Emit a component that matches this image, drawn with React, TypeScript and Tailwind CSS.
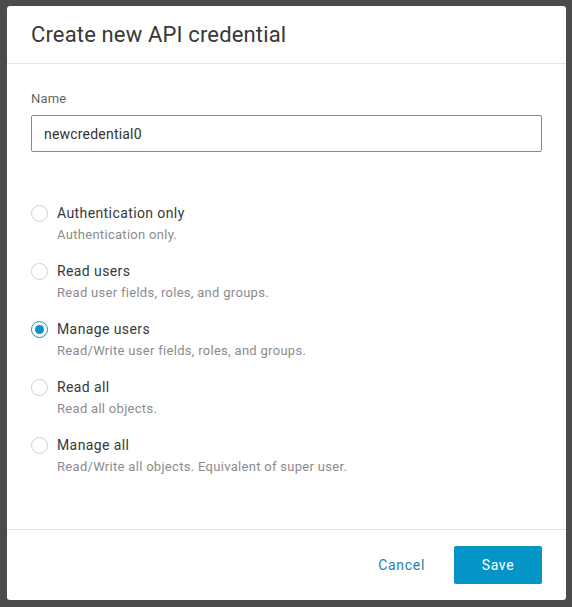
import { useState } from "react";

const options = [
	{ id: "auth", label: "Authentication only", desc: "Authentication only." },
	{ id: "read_users", label: "Read users", desc: "Read user fields, roles, and groups." },
	{ id: "manage_users", label: "Manage users", desc: "Read/Write user fields, roles, and groups." },
	{ id: "read_all", label: "Read all", desc: "Read all objects." },
	{ id: "manage_all", label: "Manage all", desc: "Read/Write all objects. Equivalent of super user." },
];

export default function App() {
	const [selected, setSelected] = useState("manage_users");
	const [name, setName] = useState("newcredential0");

	return (
		<div
			className="w-[572px] h-[607px] bg-[#4b4b4b] pl-[7px] pt-[6px] overflow-hidden"
			style={{ fontFamily: "Roboto, 'Liberation Sans', sans-serif" }}
		>
			<div className="w-[559px] h-[594px] bg-white rounded-[3px] flex flex-col">
				{/* Header */}
				<div className="h-[58px] border-b border-[#e3e3e3] px-6 flex items-center">
					<h2 className="text-[22px] text-[#383838] leading-none pt-[1px] tracking-[0.15px]">
						Create new API credential
					</h2>
				</div>

				{/* Body */}
				<div className="flex-1 px-6 pt-[27px]">
					<label className="block text-[13px] text-[#666] leading-[16px] mb-[8px] tracking-[0.2px]">Name</label>
					<input
						value={name}
						onChange={(e) => setName(e.target.value)}
						className="w-full h-[37px] border border-[#2ba8d8] rounded-[2px] px-3 text-[14px] text-[#333] outline-none tracking-[0.2px]"
					/>

					<div className="mt-[52px] flex flex-col gap-[19px]">
						{options.map((o) => (
							<label key={o.id} className="flex gap-[9px] cursor-pointer">
								<span
									className={
										o.id === selected
											? "mt-[1px] w-[17px] h-[17px] rounded-full border-[1.5px] border-[#0b93c8] flex items-center justify-center shrink-0"
											: "mt-[1px] w-[17px] h-[17px] rounded-full border border-[#cfcfcf] shrink-0"
									}
									onClick={() => setSelected(o.id)}
								>
									{o.id === selected && <span className="w-[9px] h-[9px] rounded-full bg-[#0b93c8]" />}
								</span>
								<span className="flex flex-col">
									<span className="text-[14px] text-[#383838] leading-[18px] tracking-[0.4px]">{o.label}</span>
									<span className="text-[13px] text-[#8c8c8c] leading-[16px] mt-[5px] tracking-[0.3px]">{o.desc}</span>
								</span>
							</label>
						))}
					</div>
				</div>

				{/* Footer */}
				<div className="h-[71px] border-t border-[#e3e3e3] px-6 flex items-center justify-end gap-[29px]">
					<button type="button" className="text-[14px] text-[#1b83ae] tracking-[0.7px]">
						Cancel
					</button>
					<button
						type="button"
						className="w-[88px] h-[38px] bg-[#0494c7] text-white text-[14px] rounded-[2px] tracking-[0.7px]"
					>
						Save
					</button>
				</div>
			</div>
		</div>
	);
}
